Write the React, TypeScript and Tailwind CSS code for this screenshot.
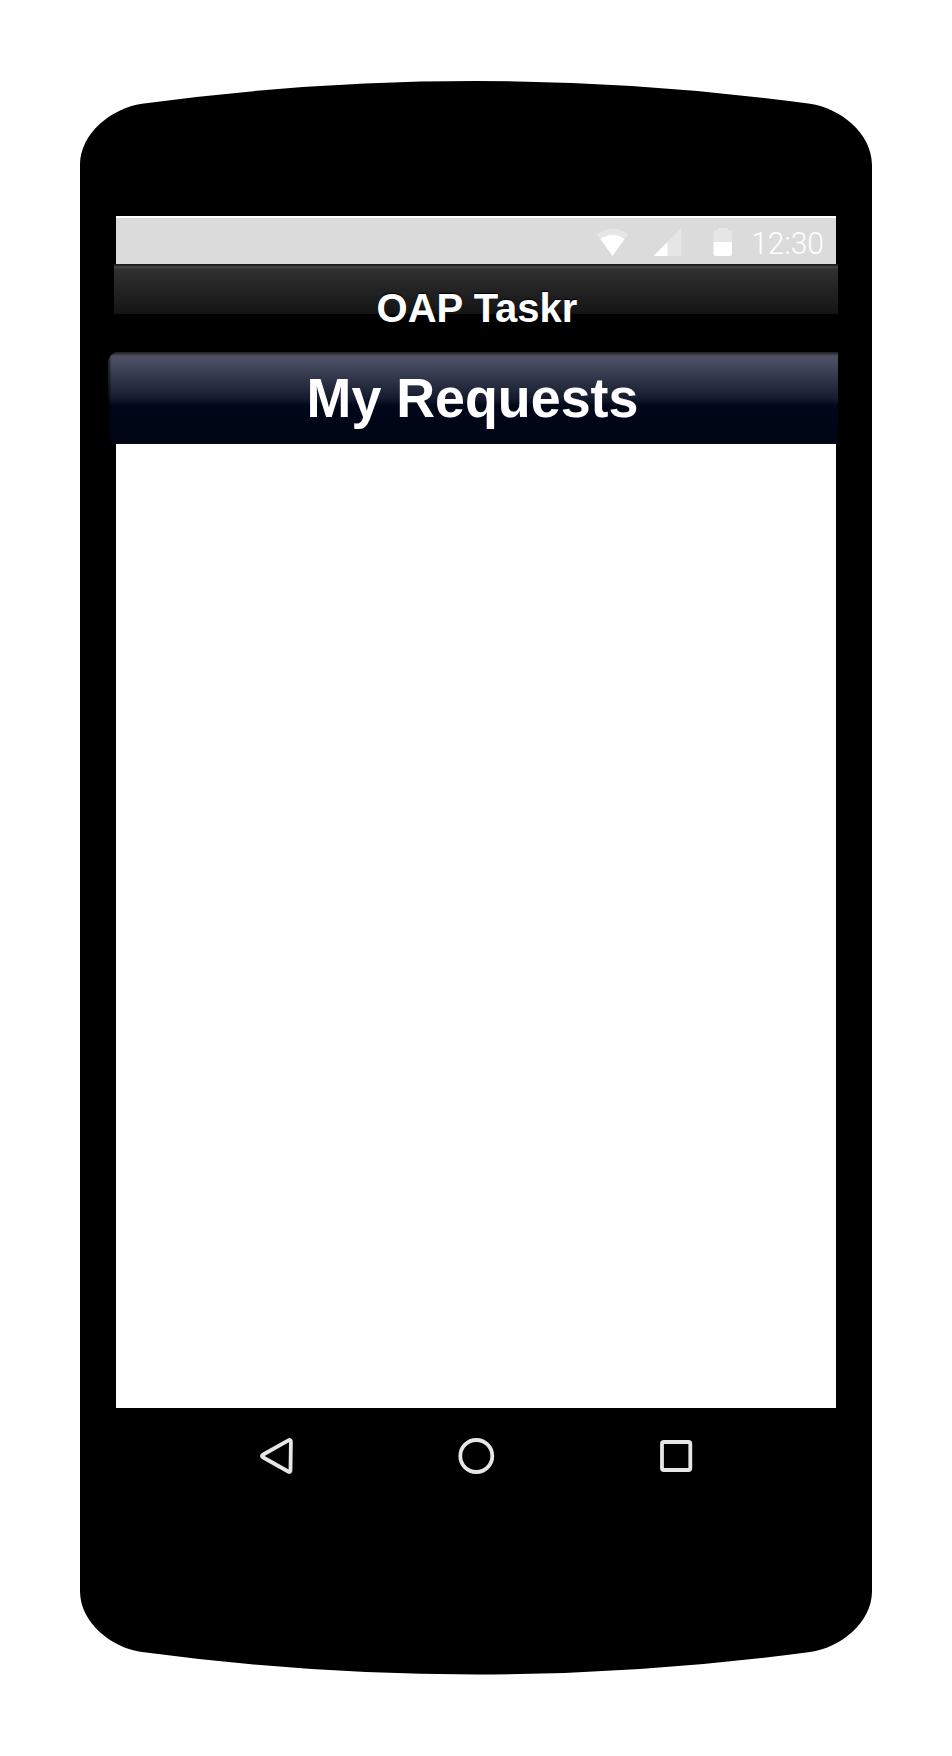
function PhoneBody() {
  return (
    <svg className="absolute inset-0" width="952" height="1756" viewBox="0 0 952 1756" aria-hidden="true">
      <path
        d="M80 165C80 133 112 108 142 103.700Q476 58.500 810 103.700C840 108 872 133 872 165V1591C872 1623 840 1648 810 1652Q476 1697 142 1652C112 1648 80 1623 80 1591Z"
        fill="#000"
      />
    </svg>
  );
}

function StatusBar() {
  return (
    <div className="mx-2 flex h-12 items-start justify-end border-t-2 border-white bg-[#dbdbdb]">
      <svg className="mt-2.5 mr-3 h-9 w-[145px] shrink-0" viewBox="0 0 145 36" aria-hidden="true">
        <path d="M2.500 6.500Q18.500-5 34.500 6.500L18.500 28Z" fill="#e6e6e6" />
        <path d="M6.500 11Q18.500 3 30.500 11L18.500 28Z" fill="#fff" />
        <path d="M59.500 28L87.500 0V28Z" fill="#e6e6e6" />
        <path d="M59.500 28L73.500 14V28Z" fill="#fff" />
        <path d="M124 0h10v2h2q2 0 2 2v10h-18.500V4q0-2 2-2h2.500Z" fill="#e6e6e6" />
        <path d="M119.500 14h18.500v12q0 2-2 2h-14.500q-2 0-2-2Z" fill="#fff" />
      </svg>
      <span className="mt-1.5 mr-3 scale-y-[1.04] font-[Roboto,sans-serif] text-[30px] leading-10 font-light text-white">12:30</span>
    </div>
  );
}

function NavigationBar() {
  return (
    <nav className="mx-2 flex h-24 items-center justify-between pr-[140px] pl-[142px]">
      <button aria-label="Back" className="size-10">
        <svg viewBox="0 0 40 40" fill="none" stroke="#e6e6e6" strokeWidth="3.800" strokeLinejoin="round" aria-hidden="true">
          <path d="M5.300 18.500L30.400 4.400Q32.900 3.200 32.900 5.700L32.500 34.200Q32.500 36.800 30.200 35.500L5.300 21.500Q2.600 20 5.300 18.500Z" />
        </svg>
      </button>
      <button aria-label="Home" className="size-10">
        <svg viewBox="0 0 40 40" fill="none" stroke="#e6e6e6" strokeWidth="3.800" aria-hidden="true">
          <circle cx="19.300" cy="20" r="16" />
        </svg>
      </button>
      <button aria-label="Recent apps" className="size-10">
        <svg viewBox="0 0 40 40" fill="none" stroke="#e6e6e6" strokeWidth="3.800" aria-hidden="true">
          <rect x="6" y="6" width="28.300" height="28" rx="1.800" />
        </svg>
      </button>
    </nav>
  );
}

export default function App() {
  return (
    <div className="relative h-[1756px] w-[952px] overflow-hidden bg-white font-['Liberation_Sans',Arial,sans-serif]">
      <PhoneBody />
      <main className="relative ml-[108px] w-[736px] pt-[216px]">
        <StatusBar />
        <header className="mx-1.5 flex h-[88px] items-center justify-center bg-black bg-[linear-gradient(#1b1b1b_0px,#1b1b1b_1px,#333_2px,#484848_3px,#303030_5px,#141414_50px,#000_50px)] pl-0.5 text-white">
          <h1 className="scale-y-[1.03] text-[40px] leading-none font-bold whitespace-nowrap [text-shadow:0_-1px_1px_#000]">OAP Taskr</h1>
        </header>
        <section className="mr-1.5 flex h-[92px] items-center justify-center bg-[linear-gradient(#292929_0px,#34363d_2px,#4d5265_4px,#484c61_10px,#171b30_46px,#000718_54px,#000515_90px,#180c1a_92px)] pt-0.5 pr-px shadow-[inset_2px_0_2px_#0009] [clip-path:polygon(8px_0,100%_0,100%_100%,6px_100%,2px_97%,0_93%,0_8px,3px_3px)]">
          <h2 className="scale-y-[1.02] text-[53.800px] leading-none font-bold whitespace-nowrap text-white">My Requests</h2>
        </section>
        <div className="mx-2 h-[964px] bg-white" />
        <NavigationBar />
      </main>
    </div>
  );
}
